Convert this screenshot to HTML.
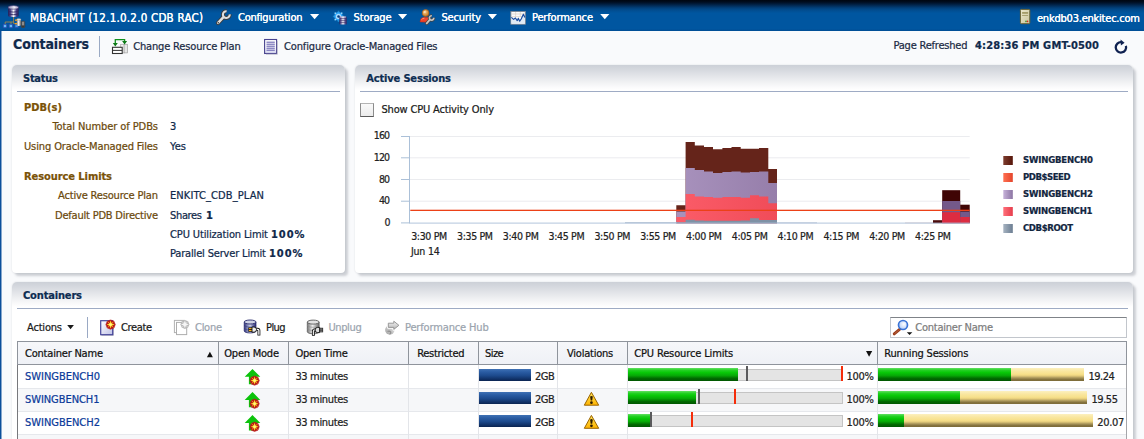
<!DOCTYPE html>
<html lang="en"><head><meta charset="utf-8"><title>Containers</title>
<style>
html,body{margin:0;padding:0}
body{width:1144px;height:439px;overflow:hidden;position:relative;background:#f9fafc;font-family:"DejaVu Sans Condensed","Liberation Sans",sans-serif;}
.t{-webkit-text-stroke:0.22px currentColor;position:absolute;white-space:pre;line-height:20px;height:20px;font-family:"DejaVu Sans Condensed","Liberation Sans",sans-serif;}
.tb{text-shadow:0 0 0.6px rgba(255,255,255,.9);}
.abs{position:absolute}
#topbar{left:0;top:0;width:1144px;height:30.5px;background:linear-gradient(#000611 0,#000d20 2px,#011c3c 4px,#022e5c 6px,#02407b 8px,#024c8e 10px,#01539a 12px,#0056a0 13.5px,#0056a0 28.5px,#004f97 30.5px);}
#leftb{left:0;top:30.5px;width:2px;height:409px;background:linear-gradient(90deg,#0b4f9b 0,#0b4f9b 1px,#86a7cd 1px,#86a7cd 1.5px,rgba(134,167,205,0) 2px);}
.panel{position:absolute;background:#fff;border-radius:5px 5px 4px 4px;box-shadow:3px 3px 2.5px rgba(70,78,95,.25),0 0 2px rgba(50,55,70,.14);}
.panel .hd{position:absolute;left:0;top:0;right:0;height:25px;border-radius:5px 5px 0 0;background:linear-gradient(#ccd0d7 0,#d6d9df 5px,#e3e5e9 11px,#f0f1f3 17px,#fafafb 22px,#fff 25px);}
.panel .rule{position:absolute;left:5.5px;right:5.5px;top:26px;height:1px;background:#9eabc4;}
.vsep{position:absolute;width:1px;background:#9aa9c4;}
#tbl{left:17px;top:341px;width:1110px;height:98px;border-left:1px solid #77787c;border-right:1px solid #a5a6aa;box-sizing:border-box;background:#fff;}
#thead{left:17px;top:341px;width:1110px;height:24px;box-sizing:border-box;border:1px solid #8f949c;background:linear-gradient(#f6f7fa,#eff1f6);}
.cdh{position:absolute;top:342px;height:22px;width:1px;background:#8f949c;}
.cdb{position:absolute;top:365px;height:74px;width:1px;background:#e3e5e9;}
.rowalt{position:absolute;left:18px;width:1108px;height:23px;background:#f6f7f9;}
.rowln{position:absolute;left:18px;width:1108px;height:1px;background:#e6e8ec;}
.bbar{position:absolute;height:12.5px;width:52px;left:479px;background:linear-gradient(#3f71b4 0,#2a5ca3 25%,#1d4a8c 55%,#0e2c5f 90%,#0b2450 100%);}
.track{position:absolute;left:627.8px;width:214.8px;box-sizing:border-box;background:#e4e4e4;border:1px solid #c4c4c4;}
.gbar{position:absolute;background:linear-gradient(#62e062 0,#22d022 18%,#08c808 35%,#06a806 58%,#016a01 80%,#005600 100%);}
.ybar{position:absolute;background:linear-gradient(#fcf0bf 0,#f9e69f 25%,#f7e08a 48%,#e6cd7c 60%,#a8955a 76%,#85733e 88%,#7c6b39 100%);}
.gbar2{position:absolute;height:12.8px;background:linear-gradient(#3fd63f 0,#1fbb1f 25%,#0e9a0e 55%,#077007 88%,#055a05 100%);}
.mk{position:absolute;width:2px;}

</style></head>
<body>
<div id="topbar" class="abs"></div>
<div id="leftb" class="abs"></div>
<!-- title row -->
<div class="vsep" style="left:99px;top:36px;height:21px"></div>

<!-- panels -->
<div class="panel" style="left:11.5px;top:65px;width:333.5px;height:207.7px"><div class="hd"></div><div class="rule"></div></div>
<div class="panel" style="left:354.5px;top:65px;width:778.7px;height:207.7px"><div class="hd"></div><div class="rule"></div></div>
<div class="panel" style="left:11.5px;top:282px;width:1121.7px;height:180px"><div class="hd"></div><div class="rule"></div></div>

<!-- checkbox -->
<div class="abs" style="left:360px;top:103px;width:14px;height:14px;box-sizing:border-box;border:1px solid;border-color:#b4b4b4 #8c8c8c #5a5a5a #8c8c8c;background:linear-gradient(#fafafa,#ebebeb)"></div>

<svg class="abs" style="left:0;top:0" width="1144" height="439" viewBox="0 0 1144 439">
<defs>
<linearGradient id="gp" x1="0" x2="1" y1="0" y2="0"><stop offset="0" stop-color="#a892bd"/><stop offset="1" stop-color="#967eaa"/></linearGradient>
<linearGradient id="gr" x1="0" x2="1" y1="0" y2="0"><stop offset="0" stop-color="#fb5c68"/><stop offset="1" stop-color="#f04c59"/></linearGradient>
<linearGradient id="sw0" x1="0" x2="1" y1="0" y2="0"><stop offset="0" stop-color="#7d3d2e"/><stop offset="1" stop-color="#561509"/></linearGradient>
<linearGradient id="sw1" x1="0" x2="1" y1="0" y2="0"><stop offset="0" stop-color="#ff7050"/><stop offset="1" stop-color="#e4452c"/></linearGradient>
<linearGradient id="sw2" x1="0" x2="1" y1="0" y2="0"><stop offset="0" stop-color="#c6b2d9"/><stop offset="1" stop-color="#8c75a3"/></linearGradient>
<linearGradient id="sw3" x1="0" x2="1" y1="0" y2="0"><stop offset="0" stop-color="#ff707a"/><stop offset="1" stop-color="#e63d4c"/></linearGradient>
<linearGradient id="sw4" x1="0" x2="1" y1="0" y2="0"><stop offset="0" stop-color="#a6b3c1"/><stop offset="1" stop-color="#6c7e92"/></linearGradient>
</defs>
<rect x="409.4" y="136.0" width="560.3" height="1" fill="#ebecef"/>
<rect x="409.4" y="157.3" width="560.3" height="1" fill="#ebecef"/>
<rect x="409.4" y="179.0" width="560.3" height="1" fill="#ebecef"/>
<rect x="409.4" y="200.7" width="560.3" height="1" fill="#ebecef"/>
<path d="M676.3 223.2 L676.3 205.2 L685.6 205.2 L685.6 142 L694.8 142 L694.8 145.5 L704 145.5 L704 147 L713 147 L713 149.3 L722.4 149.3 L722.4 148 L731.5 148 L731.5 147 L740.7 147 L740.7 148.8 L750 148.8 L750 148.8 L759 148.8 L759 148 L768.3 148 L768.3 168.9 L777 168.9 L777 223.2 Z" fill="#65241a"/>
<path d="M676.3 223.2 L676.3 211.5 L685.6 211.5 L685.6 168 L694.8 168 L694.8 170 L704 170 L704 171.5 L713 171.5 L713 173 L722.4 173 L722.4 172 L731.5 172 L731.5 171.4 L740.7 171.4 L740.7 172.6 L750 172.6 L750 171.9 L759 171.9 L759 171.4 L768.3 171.4 L768.3 183 L777 183 L777 223.2 Z" fill="url(#gp)"/>
<path d="M676.3 223.2 L676.3 217 L685.6 217 L685.6 194 L694.8 194 L694.8 196.4 L704 196.4 L704 197 L713 197 L713 197.7 L722.4 197.7 L722.4 197 L731.5 197 L731.5 197 L740.7 197 L740.7 197.7 L750 197.7 L750 195.2 L759 195.2 L759 196.4 L768.3 196.4 L768.3 203.2 L777 203.2 L777 223.2 Z" fill="url(#gr)"/>
<path d="M676.3 223.2 L676.3 222.2 L685.6 222.2 L685.6 219.7 L694.8 219.7 L694.8 220.6 L704 220.6 L704 220.8 L713 220.8 L713 220.8 L722.4 220.8 L722.4 220.8 L731.5 220.8 L731.5 220.8 L740.7 220.8 L740.7 220.6 L750 220.6 L750 218.2 L759 218.2 L759 220 L768.3 220 L768.3 220 L777 220 L777 223.2 Z" fill="#7f91a5"/>
<rect x="625" y="222.2" width="52" height="1" fill="#9fb0c6" opacity=".8"/>
<rect x="777" y="222.3" width="40" height="0.9" fill="#a9b8cc" opacity=".7"/>
<rect x="905" y="222.3" width="28" height="1" fill="#c9a9b0" opacity=".45"/>
<rect x="933" y="220.2" width="9.2" height="3" fill="#4a0a0a"/>
<rect x="942.2" y="190.2" width="18" height="33" fill="#3f0505"/>
<rect x="942.2" y="201" width="18" height="22.2" fill="#74598a"/>
<rect x="942.2" y="212.2" width="18" height="11" fill="#dc2c41"/>
<rect x="960.2" y="204.7" width="9.5" height="18.5" fill="#3f0505"/>
<rect x="960.2" y="211.5" width="9.5" height="11.7" fill="#74598a"/>
<rect x="960.2" y="217" width="9.5" height="6.2" fill="#dc2c41"/>
<rect x="409" y="136" width="1" height="87.4" fill="#abc0d8"/>
<rect x="409.4" y="222.6" width="560.3" height="1" fill="#abc0d8" opacity=".9"/>
<rect x="401" y="136.0" width="8.4" height="1" fill="#abc0d8"/>
<rect x="401" y="157.3" width="8.4" height="1" fill="#abc0d8"/>
<rect x="401" y="179.0" width="8.4" height="1" fill="#abc0d8"/>
<rect x="401" y="200.7" width="8.4" height="1" fill="#abc0d8"/>
<rect x="401" y="222.4" width="8.4" height="1" fill="#abc0d8"/>
<rect x="410.3" y="209.7" width="559.4" height="1.3" fill="#ec4117"/>
<rect x="1003.3" y="156" width="9.5" height="9" fill="url(#sw0)"/>
<rect x="1003.3" y="173" width="9.5" height="9" fill="url(#sw1)"/>
<rect x="1003.3" y="190" width="9.5" height="9" fill="url(#sw2)"/>
<rect x="1003.3" y="207" width="9.5" height="9" fill="url(#sw3)"/>
<rect x="1003.3" y="224" width="9.5" height="9" fill="url(#sw4)"/>
</svg>

<!-- containers toolbar -->
<div class="vsep" style="left:87px;top:317px;height:21px"></div>
<div class="abs" style="left:890px;top:317px;width:237px;height:21px;box-sizing:border-box;background:#fff;border:1px solid #c2c6cc;border-top-color:#7f8388"></div>

<!-- table -->
<div id="tbl" class="abs"></div>
<div class="rowalt" style="top:388px"></div>
<div class="rowalt" style="top:434.5px"></div>
<div class="rowln" style="top:387.7px"></div>
<div class="rowln" style="top:411px"></div>
<div class="rowln" style="top:434.2px"></div>
<div id="thead" class="abs"></div>
<div class="cdb" style="left:217.9px"></div>
<div class="cdh" style="left:217.9px"></div>
<div class="cdb" style="left:288.0px"></div>
<div class="cdh" style="left:288.0px"></div>
<div class="cdb" style="left:407.9px"></div>
<div class="cdh" style="left:407.9px"></div>
<div class="cdb" style="left:477.8px"></div>
<div class="cdh" style="left:477.8px"></div>
<div class="cdb" style="left:557.1px"></div>
<div class="cdh" style="left:557.1px"></div>
<div class="cdb" style="left:626.8px"></div>
<div class="cdh" style="left:626.8px"></div>
<div class="cdb" style="left:876.9px"></div>
<div class="cdh" style="left:876.9px"></div>
<div class="bbar" style="top:368.9px"></div>
<div class="track" style="top:369.4px;height:11.5px"></div>
<div class="gbar" style="left:627.8px;top:368.2px;height:13.2px;width:110.3px"></div>
<div class="mk" style="left:746px;top:366px;height:15.3px;background:#5a5a5c"></div>
<div class="mk" style="left:841px;top:366px;height:15.3px;background:#f52d0a"></div>
<div class="ybar" style="left:878.2px;top:368.2px;height:13.2px;width:205.4px"></div>
<div class="gbar" style="left:878.2px;top:368.2px;height:13.2px;width:132.8px"></div>
<div class="bbar" style="top:391.9px"></div>
<div class="track" style="top:392.4px;height:11.4px"></div>
<div class="gbar" style="left:627.8px;top:391.4px;height:13.0px;width:68.3px"></div>
<div class="mk" style="left:698px;top:389px;height:15.3px;background:#5a5a5c"></div>
<div class="mk" style="left:734px;top:389px;height:15.3px;background:#f52d0a"></div>
<div class="ybar" style="left:878.2px;top:391.4px;height:13.0px;width:209.1px"></div>
<div class="gbar" style="left:878.2px;top:391.4px;height:13.0px;width:81.8px"></div>
<div class="bbar" style="top:414.9px"></div>
<div class="track" style="top:415.3px;height:11.5px"></div>
<div class="gbar" style="left:627.8px;top:414.4px;height:13.1px;width:22.4px"></div>
<div class="mk" style="left:650px;top:412.1px;height:15.4px;background:#5a5a5c"></div>
<div class="mk" style="left:691px;top:412.1px;height:15.4px;background:#f52d0a"></div>
<div class="ybar" style="left:878.2px;top:414.4px;height:13.1px;width:214.6px"></div>
<div class="gbar" style="left:878.2px;top:414.4px;height:13.1px;width:26.3px"></div>
<svg class="abs" style="left:0;top:0" width="1144" height="439" viewBox="0 0 1144 439">
<defs>
<linearGradient id="cyl" x1="0" x2="1" y1="0" y2="0"><stop offset="0" stop-color="#2e2660"/><stop offset=".18" stop-color="#6a5c9c"/><stop offset=".5" stop-color="#ffffff"/><stop offset=".8" stop-color="#5b4d90"/><stop offset="1" stop-color="#2e2660"/></linearGradient>
<linearGradient id="cylg" x1="0" x2="1" y1="0" y2="0"><stop offset="0" stop-color="#777"/><stop offset=".45" stop-color="#f0f0f0"/><stop offset="1" stop-color="#666"/></linearGradient>
<linearGradient id="pg" x1="0" x2="1" y1="0" y2="1"><stop offset="0" stop-color="#fff"/><stop offset="1" stop-color="#bfc1e6"/></linearGradient>
<linearGradient id="wy" x1="0" x2="0" y1="0" y2="1"><stop offset="0" stop-color="#ffe45a"/><stop offset="1" stop-color="#ffb400"/></linearGradient>
<radialGradient id="lens" cx=".6" cy=".4" r=".7"><stop offset="0" stop-color="#fff"/><stop offset="1" stop-color="#a9c6f7"/></radialGradient>
<radialGradient id="headg" cx=".38" cy=".35" r=".7"><stop offset="0" stop-color="#fff6e6"/><stop offset=".35" stop-color="#e8ae62"/><stop offset="1" stop-color="#c0701c"/></radialGradient>
<linearGradient id="cyld" x1="0" x2="1" y1="0" y2="0"><stop offset="0" stop-color="#221e54"/><stop offset=".22" stop-color="#4b4189"/><stop offset=".52" stop-color="#ffffff"/><stop offset=".78" stop-color="#4b4189"/><stop offset="1" stop-color="#221e54"/></linearGradient>
<linearGradient id="cyltop" x1="0" x2="1" y1="0" y2="0"><stop offset="0" stop-color="#8e88b8"/><stop offset=".6" stop-color="#f2f0fa"/><stop offset="1" stop-color="#9a94c0"/></linearGradient>
<linearGradient id="cylp" x1="0" x2="1" y1="0" y2="0"><stop offset="0" stop-color="#2c2e74"/><stop offset=".25" stop-color="#7c82b4"/><stop offset=".5" stop-color="#ced2e6"/><stop offset=".8" stop-color="#5a5e9c"/><stop offset="1" stop-color="#2c2e74"/></linearGradient>
<linearGradient id="globeg" x1="1" x2="0" y1="0" y2="1"><stop offset="0" stop-color="#e8e8e8"/><stop offset="1" stop-color="#a2a2a2"/></linearGradient>
<linearGradient id="arrg" x1="0" x2="0" y1="0" y2="1"><stop offset="0" stop-color="#f4f4f4"/><stop offset="1" stop-color="#b4b4b4"/></linearGradient>
<linearGradient id="pg2" x1="0" x2="0" y1="0" y2="1"><stop offset="0" stop-color="#fff"/><stop offset=".6" stop-color="#f6f6fc"/><stop offset="1" stop-color="#d4d4ee"/></linearGradient>
<linearGradient id="hostg" x1="0" x2="1" y1="0" y2="1"><stop offset="0" stop-color="#ece7cc"/><stop offset="1" stop-color="#cbc49c"/></linearGradient>
<g id="dd"><path d="M0 0 L9.2 0 L4.6 5.1 Z" fill="#fff"/></g>
<g id="star"><path d="M0 -4.7 L3.4 -3.4 L4.7 0 L3.4 3.4 L0 4.7 L-3.4 3.4 L-4.7 0 L-3.4 -3.4 Z" fill="#b8181a" stroke="#b8181a" stroke-width=".5" stroke-linejoin="round"/><path d="M-2.9 -2.9 L2.9 2.9 M2.9 -2.9 L-2.9 2.9" stroke="#ffae1a" stroke-width=".8"/><path d="M0 -4 L1.05 -1.05 L4 0 L1.05 1.05 L0 4 L-1.05 1.05 L-4 0 L-1.05 -1.05 Z" fill="#ffe128"/><circle r="1.3" fill="#fff58c"/></g>
<g id="uparrow"><path d="M252.5 368.9 L260.3 376.8 L256 376.8 L256 384.2 L248.9 384.2 L248.9 376.8 L244.7 376.8 Z" fill="#0cc30c"/><use href="#star" x="254.6" y="380.6"/></g>
<g id="warn"><path d="M591.4 392.3 L598.7 405.2 L584.3 405.2 Z" fill="url(#wy)" stroke="#9a6400" stroke-width="1" stroke-linejoin="round"/><path d="M590.1 396.6 Q591.45 395.3 592.8 396.6 L592.2 400.6 H590.7 Z" fill="#2e1c00"/><circle cx="591.45" cy="402.7" r="1.35" fill="#2e1c00"/></g>
</defs>
<!-- DB target icon -->
<g>
<path d="M5.2 24.5 V22 H13.6 M11 24.5 V22 M13.6 17 V23.6 H16.2" fill="none" stroke="#b48a3c" stroke-width=".8"/>
<rect x="3.3" y="24.3" width="3.4" height="3.4" fill="#62bcf8" stroke="#2a4cae" stroke-width=".8"/>
<rect x="9.2" y="24.3" width="3.4" height="3.4" fill="#62bcf8" stroke="#2a4cae" stroke-width=".8"/>
<rect x="15" y="24.3" width="3.2" height="3.2" fill="#3a9ae8" stroke="#2a4cae" stroke-width=".8"/>
<path d="M8.1 7.4 V15.4 A5.25 1.7 0 0 0 18.6 15.4 V7.4 Z" fill="url(#cyld)"/>
<ellipse cx="13.35" cy="7.4" rx="5.25" ry="1.8" fill="url(#cyltop)" stroke="#2c2660" stroke-width=".6"/>
<path d="M8.1 10.4 A5.25 1.7 0 0 0 18.6 10.4 M8.1 13 A5.25 1.7 0 0 0 18.6 13" fill="none" stroke="#2c2660" stroke-width=".9" opacity=".9"/>
<path d="M16.6 19.4 V25 A2.2 .9 0 0 0 21 25 V19.4 Z" fill="url(#cylg)"/>
<ellipse cx="18.8" cy="19.4" rx="2.2" ry=".9" fill="#eee" stroke="#777" stroke-width=".4"/>
<rect x="21.4" y="21.2" width="3.3" height="6.2" rx=".6" fill="#8c8c8c" stroke="#333" stroke-width=".7"/>
<rect x="21.6" y="25.4" width="2.9" height="1.9" fill="#3a3a3a"/>
<rect x="15" y="19.5" width="2.1" height="1.3" fill="#f0a020"/><rect x="15" y="23" width="2.1" height="1.3" fill="#f0a020"/>
</g>
<!-- wrench -->
<g fill="none">
<path d="M222.9 17.7 L218.1 22.9" stroke="#3b3b3b" stroke-width="4.3" stroke-linecap="round"/>
<path d="M226.6 11.2 A3.4 3.4 0 1 0 229.7 14.3" stroke="#3b3b3b" stroke-width="3.9"/>
<path d="M226.6 11.2 A3.4 3.4 0 1 0 229.7 14.3" stroke="#dedede" stroke-width="2.1"/>
<path d="M223.2 17.4 L218.1 22.9" stroke="#dedede" stroke-width="2.5" stroke-linecap="round"/>
<circle cx="218.3" cy="22.7" r=".8" fill="#3b3b3b"/>
</g>
<use href="#dd" x="310" y="14.1"/>
<use href="#dd" x="398" y="14.1"/>
<use href="#dd" x="487.8" y="14.1"/>
<use href="#dd" x="600.2" y="14.1"/>
<!-- storage icon -->
<g>
<path d="M337.63 12.50 L337.76 10.75 L339.24 10.75 L339.37 12.50 L340.64 13.02 L341.97 11.88 L343.02 12.93 L341.88 14.26 L342.40 15.53 L344.15 15.66 L344.15 17.14 L342.40 17.27 L341.88 18.54 L343.02 19.87 L341.97 20.92 L340.64 19.78 L339.37 20.30 L339.24 22.05 L337.76 22.05 L337.63 20.30 L336.36 19.78 L335.03 20.92 L333.98 19.87 L335.12 18.54 L334.60 17.27 L332.85 17.14 L332.85 15.66 L334.60 15.53 L335.12 14.26 L333.98 12.93 L335.03 11.88 L336.36 13.02 Z" fill="#1c86cc"/>
<circle cx="338.5" cy="16.4" r="4.1" fill="#2fa8fa"/>
<circle cx="338.5" cy="16.4" r="2.7" fill="#a9dcff"/>
<circle cx="338.5" cy="16.4" r="1.25" fill="#0a3c7c"/>
<circle cx="335.25" cy="13.15" r=".6" fill="#e8f6ff"/><circle cx="341.75" cy="13.15" r=".6" fill="#e8f6ff"/><circle cx="335.25" cy="19.65" r=".6" fill="#e8f6ff"/>
<rect x="339.4" y="16.4" width="7.3" height="8.2" rx="1.2" fill="url(#cyl)"/>
<path d="M339.6 18.6 H346.5 M339.6 20.6 H346.5 M339.6 22.6 H346.5" stroke="#3a2e66" stroke-width=".7" opacity=".85"/>
<path d="M340 17 H346.1" stroke="#d9d4ea" stroke-width=".8"/>
</g>
<!-- security icon -->
<g>
<path d="M420 21.9 Q420.2 17.6 423.6 17.3 L428.2 17.3 Q430 17.5 430 19 L427.6 22.2 Z" fill="#f0432a" stroke="#b82814" stroke-width=".5"/>
<path d="M421.5 19.6 Q422.4 18.3 424.4 18.2" stroke="#ff9a80" stroke-width=".9" fill="none"/>
<circle cx="425.6" cy="13" r="3.4" fill="url(#headg)" stroke="#a85c14" stroke-width=".7"/>
<g fill="none">
<path d="M429.7 19.9 L426.7 23.3" stroke="#444" stroke-width="3.3" stroke-linecap="round"/>
<path d="M431.8 15.7 A2.2 2.2 0 1 0 433.8 17.7" stroke="#444" stroke-width="3.1"/>
<path d="M431.8 15.7 A2.2 2.2 0 1 0 433.8 17.7" stroke="#c4c4c4" stroke-width="1.6"/>
<path d="M429.9 19.7 L426.7 23.3" stroke="#c4c4c4" stroke-width="1.8" stroke-linecap="round"/>
</g>
</g>
<!-- performance icon -->
<g>
<rect x="510.9" y="11.5" width="14.4" height="12.7" fill="#fbfbfb" stroke="#7f8692" stroke-width=".9"/>
<path d="M511.4 14 H524.9 M511.4 16.6 H524.9 M515.6 12 V16.6 M520.3 12 V16.6" stroke="#d9cfc4" stroke-width=".7" fill="none"/>
<path d="M511.4 17.4 L513.6 19.4 L515.4 18 L517.2 20.6 L518.4 18.4 L519.7 21.2 L521.2 19 L523.4 14.2 L524.9 17.6 V23.7 H511.4 Z" fill="#dfeaf5"/>
<path d="M511.4 17.4 L513.6 19.4 L515.4 18 L517.2 20.6 L518.4 18.4 L519.7 21.2 L521.2 19 L523.4 14.2 L524.9 17.6" fill="none" stroke="#1d4fa3" stroke-width="1.2" stroke-linejoin="round"/>
</g>
<!-- host icon -->
<g>
<rect x="1020.4" y="9.4" width="9.4" height="14.3" rx=".9" fill="url(#hostg)" stroke="#6c6230" stroke-width="1"/>
<rect x="1022.1" y="12" width="6" height="1.8" fill="#a39b68"/>
<rect x="1022.1" y="15" width="6" height=".9" fill="#a39b68"/>
<circle cx="1026" cy="21.4" r=".8" fill="#2aa02a"/><circle cx="1027.5" cy="21.4" r=".8" fill="#e02020"/>
</g>
<!-- change resource plan -->
<g>
<rect x="120.7" y="44.3" width="3.4" height="8.6" fill="#f4f4f4" stroke="#a9a9a9" stroke-width=".7"/>
<rect x="124.1" y="44.3" width="3.4" height="8.6" fill="#e6e6e6" stroke="#a2a2a2" stroke-width=".7"/>
<path d="M115.3 44 V39.7 H124.6 V42" fill="none" stroke="#12901e" stroke-width="1.3"/>
<path d="M112.8 43 H117.8 L115.3 46.5 Z M122.1 41.1 H127.1 L124.6 44.6 Z" fill="#0d7a16"/>
<rect x="112.5" y="47.3" width="9.7" height="6.2" fill="#fff" stroke="#333" stroke-width="1.1"/>
<path d="M112.5 50.4 H122.2" stroke="#333" stroke-width="1"/>
</g>
<!-- configure file icon -->
<g>
<rect x="264.6" y="39.5" width="12" height="14" fill="url(#pg2)" stroke="#48428e" stroke-width="1.1"/>
<path d="M266.5 42.2 H274.8 M266.5 44.2 H274.8 M266.5 46.2 H274.8 M266.5 48.2 H274.8 M266.5 50.2 H274.8" stroke="#5f59ac" stroke-width="1"/>
<path d="M277.4 41 V54.3 H266" stroke="#b9b9c9" stroke-width=".8" fill="none"/>
</g>
<!-- refresh -->
<g>
<path d="M1125.9 45.8 A5.2 5.2 0 1 1 1121.4 42.15" fill="none" stroke="#0f2150" stroke-width="2.3"/>
<path d="M1120.5 39.6 L1124.6 42.7 L1120.9 45.5 Z" fill="#0f2150"/>
</g>
<!-- Actions dd -->
<path d="M67.2 325 H73.9 L70.55 329.2 Z" fill="#1a1a1a"/>
<!-- create -->
<g>
<path d="M101.4 335.4 H113.4 V322.4" fill="none" stroke="#b8b8c4" stroke-width=".9"/><rect x="100.7" y="320.7" width="12" height="14" fill="url(#pg)" stroke="#45459a" stroke-width="1.2"/>
<use href="#star" x="110.6" y="324.6"/>
</g>
<!-- clone -->
<g>
<rect x="174.4" y="320.4" width="10.2" height="12.2" fill="#fff" stroke="#b2b2b2" stroke-width="1"/>
<rect x="176.5" y="322.4" width="10.2" height="12.2" fill="#fff" stroke="#adadad" stroke-width="1"/>
<g transform="translate(184.9 324.4)"><path d="M0 -4.5 L3.2 -3.2 L4.5 0 L3.2 3.2 L0 4.5 L-3.2 3.2 L-4.5 0 L-3.2 -3.2 Z" fill="#b9b9b9"/><path d="M-2.8 -2.8 L2.8 2.8 M2.8 -2.8 L-2.8 2.8" stroke="#e4e4e4" stroke-width=".8"/><path d="M0 -3.9 L1.05 -1.05 L3.9 0 L1.05 1.05 L0 3.9 L-1.05 1.05 L-3.9 0 L-1.05 -1.05 Z" fill="#f6f6f6"/></g>
</g>
<!-- plug -->
<g>
<path d="M244.2 322 V331 A5.9 2 0 0 0 256 331 V322 Z" fill="url(#cylp)" stroke="#26286a" stroke-width=".7"/>
<path d="M244.2 325 A5.9 2 0 0 0 256 325 M244.2 328 A5.9 2 0 0 0 256 328" fill="none" stroke="#30327a" stroke-width=".6" opacity=".75"/>
<ellipse cx="250.1" cy="322" rx="5.9" ry="2" fill="#cfd2e4" stroke="#26286a" stroke-width=".9"/>
<path d="M256.3 329.3 H257.7 Q258.9 329.3 258.9 330.6 V335.4" fill="none" stroke="#111" stroke-width="2.9"/>
<path d="M256.3 329.3 H257.7 Q258.9 329.3 258.9 330.6 V334.7" fill="none" stroke="#fff" stroke-width="1.3"/>
<rect x="248.3" y="327.4" width="4" height="4.4" fill="#111"/>
<rect x="248.9" y="328.1" width="3.2" height="1.1" fill="#ffb31a"/><rect x="248.9" y="330" width="3.2" height="1.1" fill="#ffb31a"/>
<path d="M252 327 H254 Q256.5 327 256.5 329.6 Q256.5 332.2 254 332.2 H252 Z" fill="#ececec" stroke="#111" stroke-width=".9"/>
</g>
<!-- unplug -->
<g>
<path d="M307.3 322.1 V331.8 A5.9 2 0 0 0 319.1 331.8 V322.1 Z" fill="url(#cylg)" stroke="#5c5c5c" stroke-width=".8"/>
<path d="M307.3 325.3 A5.9 2 0 0 0 319.1 325.3 M307.3 328.5 A5.9 2 0 0 0 319.1 328.5" fill="none" stroke="#8a8a8a" stroke-width=".6"/>
<ellipse cx="313.2" cy="322.1" rx="5.9" ry="2" fill="#e2e2e2" stroke="#5c5c5c" stroke-width=".9"/>
<path d="M313.4 335.8 V331.1 Q313.4 329.9 314.7 329.9 H315.6" fill="none" stroke="#111" stroke-width="2.9"/>
<path d="M313.4 335.1 V331.1 Q313.4 329.9 314.7 329.9 H315.6" fill="none" stroke="#e6e6e6" stroke-width="1.3"/>
<rect x="319.2" y="327.8" width="3.9" height="4.5" fill="#111"/>
<rect x="319.6" y="328.6" width="3" height=".9" fill="#c4c4c4"/><rect x="319.6" y="330.6" width="3" height=".9" fill="#c4c4c4"/>
<path d="M319.6 327.4 H317.6 Q315.1 327.4 315.1 330 Q315.1 332.6 317.6 332.6 H319.6 Z" fill="#dedede" stroke="#111" stroke-width=".9"/>
</g>
<!-- perf hub -->
<g>
<circle cx="389.8" cy="330" r="4.7" fill="url(#globeg)"/>
<path d="M387.5 331.5 Q389.5 330.5 390.8 332.2 Q391 333.6 389.6 334.2" fill="none" stroke="#8f8f8f" stroke-width="1.1"/>
<path d="M388.3 323.2 H393.8 V321.2 L398.9 325.3 L393.8 329.4 V327.4 H388.3 Z" fill="#fff" stroke="#fff" stroke-width="2.6" stroke-linejoin="round"/>
<path d="M388.3 323.2 H393.8 V321.2 L398.9 325.3 L393.8 329.4 V327.4 H388.3 Z" fill="url(#arrg)" stroke="#8e8e8e" stroke-width=".9" stroke-linejoin="round"/>
</g>
<!-- magnifier -->
<g>
<path d="M899.6 329.4 L894.2 333.9" stroke="#9a3a18" stroke-width="2.8" stroke-linecap="round"/>
<path d="M899.2 329.8 L894.6 333.6" stroke="#e0a080" stroke-width=".8" stroke-dasharray=".7 .7"/>
<circle cx="903" cy="325" r="4.5" fill="url(#lens)" stroke="#3b74d6" stroke-width="1.7"/>
<path d="M906.8 332.3 H912.3 L909.55 335.1 Z" fill="#111"/>
</g>
<!-- sort indicators -->
<path d="M206.9 357.2 H212.9 L209.9 351.7 Z" fill="#111"/>
<path d="M866 350.9 H872.2 L869.1 356.7 Z" fill="#111"/>
<!-- arrows -->
<use href="#uparrow"/>
<use href="#uparrow" y="23.1"/>
<use href="#uparrow" y="46.2"/>
<use href="#warn"/>
<use href="#warn" y="23.1"/>
</svg>


<div id="texts">
<span class="t tb" style="left:30.0px;top:7.9px;font-size:11.5px;color:#fff;letter-spacing:0.229px;">MBACHMT (12.1.0.2.0 CDB RAC)</span>
<span class="t tb" style="left:238.0px;top:8.3px;font-size:11px;color:#fff;letter-spacing:-0.219px;">Configuration</span>
<span class="t tb" style="left:353.6px;top:8.3px;font-size:11px;color:#fff;letter-spacing:-0.122px;">Storage</span>
<span class="t tb" style="left:441.5px;top:8.3px;font-size:11px;color:#fff;letter-spacing:-0.163px;">Security</span>
<span class="t tb" style="left:532.0px;top:8.3px;font-size:11px;color:#fff;letter-spacing:-0.166px;">Performance</span>
<span class="t tb" style="left:1037.0px;top:9.0px;font-size:11px;color:#fff;letter-spacing:-0.219px;">enkdb03.enkitec.com</span>
<span class="t" style="left:13.0px;top:34.3px;font-size:14px;color:#10294b;font-weight:bold;letter-spacing:-0.104px;">Containers</span>
<span class="t" style="left:133.2px;top:36.6px;font-size:11px;color:#1b2a44;letter-spacing:-0.161px;">Change Resource Plan</span>
<span class="t" style="left:284.0px;top:36.6px;font-size:11px;color:#1b2a44;letter-spacing:-0.129px;">Configure Oracle-Managed Files</span>
<span class="t" style="left:893.5px;top:35.6px;font-size:11px;color:#1b2a44;letter-spacing:-0.210px;">Page Refreshed</span>
<span class="t" style="left:975.0px;top:35.6px;font-size:11px;color:#10294b;font-weight:bold;letter-spacing:0.161px;">4:28:36 PM GMT-0500</span>
<span class="t" style="left:23.0px;top:68.5px;font-size:11px;color:#0e2d52;font-weight:bold;letter-spacing:-0.244px;">Status</span>
<span class="t" style="left:24.0px;top:98.1px;font-size:11px;color:#7a5207;font-weight:bold;letter-spacing:0.009px;">PDB(s)</span>
<span class="t" style="left:52.5px;top:117.2px;font-size:11px;color:#6b490c;letter-spacing:-0.088px;">Total Number of PDBs</span>
<span class="t" style="left:24.0px;top:136.5px;font-size:11px;color:#6b490c;letter-spacing:-0.121px;">Using Oracle-Managed Files</span>
<span class="t" style="left:170.0px;top:117.2px;font-size:11px;color:#10294a;">3</span>
<span class="t" style="left:170.0px;top:136.5px;font-size:11px;color:#10294a;letter-spacing:0.078px;">Yes</span>
<span class="t" style="left:24.0px;top:166.7px;font-size:11px;color:#7a5207;font-weight:bold;letter-spacing:-0.071px;">Resource Limits</span>
<span class="t" style="left:58.0px;top:185.9px;font-size:11px;color:#6b490c;letter-spacing:-0.171px;">Active Resource Plan</span>
<span class="t" style="left:55.0px;top:206.1px;font-size:11px;color:#6b490c;letter-spacing:-0.206px;">Default PDB Directive</span>
<span class="t" style="left:170.0px;top:185.9px;font-size:11px;color:#10294a;letter-spacing:0.107px;">ENKITC_CDB_PLAN</span>
<span class="t" style="left:170.0px;top:206.1px;font-size:11px;color:#10294a;letter-spacing:-0.341px;">Shares</span>
<span class="t" style="left:206.0px;top:206.1px;font-size:11px;color:#10294a;font-weight:bold;">1</span>
<span class="t" style="left:170.0px;top:225.1px;font-size:11px;color:#10294a;letter-spacing:-0.127px;">CPU Utilization Limit</span>
<span class="t" style="left:271.0px;top:225.1px;font-size:11px;color:#10294a;font-weight:bold;letter-spacing:0.974px;">100%</span>
<span class="t" style="left:170.0px;top:244.1px;font-size:11px;color:#10294a;letter-spacing:-0.164px;">Parallel Server Limit</span>
<span class="t" style="left:269.0px;top:244.1px;font-size:11px;color:#10294a;font-weight:bold;letter-spacing:0.974px;">100%</span>
<span class="t" style="left:366.3px;top:68.5px;font-size:11px;color:#0e2d52;font-weight:bold;letter-spacing:-0.165px;">Active Sessions</span>
<span class="t" style="left:381.4px;top:100.1px;font-size:11px;color:#1a1a1a;letter-spacing:-0.157px;">Show CPU Activity Only</span>
<span class="t" style="left:373.7px;top:124.8px;font-size:10.5px;color:#222;letter-spacing:-0.816px;">160</span>
<span class="t" style="left:373.7px;top:147.1px;font-size:10.5px;color:#222;letter-spacing:-0.816px;">120</span>
<span class="t" style="left:379.1px;top:168.8px;font-size:10.5px;color:#222;letter-spacing:-1.031px;">80</span>
<span class="t" style="left:379.1px;top:189.5px;font-size:10.5px;color:#222;letter-spacing:-1.031px;">40</span>
<span class="t" style="left:384.6px;top:212.2px;font-size:10.5px;color:#222;">0</span>
<span class="t" style="left:411.2px;top:226.0px;font-size:10.5px;color:#222;letter-spacing:-0.344px;">3:30 PM</span>
<span class="t" style="left:457.0px;top:226.0px;font-size:10.5px;color:#222;letter-spacing:-0.344px;">3:35 PM</span>
<span class="t" style="left:502.8px;top:226.0px;font-size:10.5px;color:#222;letter-spacing:-0.344px;">3:40 PM</span>
<span class="t" style="left:548.6px;top:226.0px;font-size:10.5px;color:#222;letter-spacing:-0.344px;">3:45 PM</span>
<span class="t" style="left:594.4px;top:226.0px;font-size:10.5px;color:#222;letter-spacing:-0.344px;">3:50 PM</span>
<span class="t" style="left:640.2px;top:226.0px;font-size:10.5px;color:#222;letter-spacing:-0.344px;">3:55 PM</span>
<span class="t" style="left:686.0px;top:226.0px;font-size:10.5px;color:#222;letter-spacing:-0.344px;">4:00 PM</span>
<span class="t" style="left:731.8px;top:226.0px;font-size:10.5px;color:#222;letter-spacing:-0.344px;">4:05 PM</span>
<span class="t" style="left:777.6px;top:226.0px;font-size:10.5px;color:#222;letter-spacing:-0.344px;">4:10 PM</span>
<span class="t" style="left:823.4px;top:226.0px;font-size:10.5px;color:#222;letter-spacing:-0.344px;">4:15 PM</span>
<span class="t" style="left:869.2px;top:226.0px;font-size:10.5px;color:#222;letter-spacing:-0.344px;">4:20 PM</span>
<span class="t" style="left:915.0px;top:226.0px;font-size:10.5px;color:#222;letter-spacing:-0.344px;">4:25 PM</span>
<span class="t" style="left:411.0px;top:240.5px;font-size:10.5px;color:#222;letter-spacing:-0.216px;">Jun 14</span>
<span class="t" style="left:1023.0px;top:149.7px;font-size:9.5px;color:#12263f;font-weight:bold;letter-spacing:-0.181px;">SWINGBENCH0</span>
<span class="t" style="left:1023.0px;top:166.8px;font-size:9.5px;color:#12263f;font-weight:bold;letter-spacing:-0.467px;">PDB$SEED</span>
<span class="t" style="left:1023.0px;top:183.8px;font-size:9.5px;color:#12263f;font-weight:bold;letter-spacing:-0.181px;">SWINGBENCH2</span>
<span class="t" style="left:1023.0px;top:200.9px;font-size:9.5px;color:#12263f;font-weight:bold;letter-spacing:-0.231px;">SWINGBENCH1</span>
<span class="t" style="left:1023.0px;top:217.9px;font-size:9.5px;color:#12263f;font-weight:bold;letter-spacing:-0.397px;">CDB$ROOT</span>
<span class="t" style="left:23.0px;top:285.6px;font-size:11px;color:#0e2d52;font-weight:bold;letter-spacing:-0.161px;">Containers</span>
<span class="t" style="left:27.0px;top:318.1px;font-size:11px;color:#1a1a1a;letter-spacing:-0.190px;">Actions</span>
<span class="t" style="left:121.0px;top:318.1px;font-size:11px;color:#1a1a1a;letter-spacing:-0.375px;">Create</span>
<span class="t" style="left:195.0px;top:318.1px;font-size:11px;color:#9ba4ae;letter-spacing:-0.273px;">Clone</span>
<span class="t" style="left:266.0px;top:318.1px;font-size:11px;color:#1a1a1a;letter-spacing:-0.560px;">Plug</span>
<span class="t" style="left:328.4px;top:318.1px;font-size:11px;color:#9ba4ae;letter-spacing:-0.365px;">Unplug</span>
<span class="t" style="left:405.0px;top:318.1px;font-size:11px;color:#9ba4ae;letter-spacing:-0.150px;">Performance Hub</span>
<span class="t" style="left:915.2px;top:317.8px;font-size:11px;color:#7c7c7c;letter-spacing:-0.223px;">Container Name</span>
<span class="t" style="left:25.0px;top:343.8px;font-size:11px;color:#111;letter-spacing:-0.208px;">Container Name</span>
<span class="t" style="left:224.3px;top:343.8px;font-size:11px;color:#111;letter-spacing:-0.231px;">Open Mode</span>
<span class="t" style="left:295.4px;top:343.8px;font-size:11px;color:#111;letter-spacing:-0.171px;">Open Time</span>
<span class="t" style="left:417.2px;top:343.8px;font-size:11px;color:#111;letter-spacing:-0.302px;">Restricted</span>
<span class="t" style="left:485.0px;top:343.8px;font-size:11px;color:#111;letter-spacing:-0.576px;">Size</span>
<span class="t" style="left:567.0px;top:343.8px;font-size:11px;color:#111;letter-spacing:-0.230px;">Violations</span>
<span class="t" style="left:634.2px;top:343.8px;font-size:11px;color:#111;letter-spacing:-0.134px;">CPU Resource Limits</span>
<span class="t" style="left:884.3px;top:343.8px;font-size:11px;color:#111;letter-spacing:-0.172px;">Running Sessions</span>
<span class="t" style="left:25.0px;top:367.2px;font-size:11px;color:#0b3a99;letter-spacing:-0.016px;">SWINGBENCH0</span>
<span class="t" style="left:295.4px;top:367.2px;font-size:11px;color:#222;letter-spacing:-0.333px;">33 minutes</span>
<span class="t" style="left:535.0px;top:367.2px;font-size:11px;color:#222;letter-spacing:-0.483px;">2GB</span>
<span class="t" style="left:846.6px;top:367.2px;font-size:11px;color:#222;letter-spacing:-0.299px;">100%</span>
<span class="t" style="left:25.0px;top:390.3px;font-size:11px;color:#0b3a99;letter-spacing:-0.066px;">SWINGBENCH1</span>
<span class="t" style="left:295.4px;top:390.3px;font-size:11px;color:#222;letter-spacing:-0.333px;">33 minutes</span>
<span class="t" style="left:535.0px;top:390.3px;font-size:11px;color:#222;letter-spacing:-0.483px;">2GB</span>
<span class="t" style="left:846.6px;top:390.3px;font-size:11px;color:#222;letter-spacing:-0.299px;">100%</span>
<span class="t" style="left:25.0px;top:413.4px;font-size:11px;color:#0b3a99;letter-spacing:-0.016px;">SWINGBENCH2</span>
<span class="t" style="left:295.4px;top:413.4px;font-size:11px;color:#222;letter-spacing:-0.333px;">33 minutes</span>
<span class="t" style="left:535.0px;top:413.4px;font-size:11px;color:#222;letter-spacing:-0.483px;">2GB</span>
<span class="t" style="left:846.6px;top:413.4px;font-size:11px;color:#222;letter-spacing:-0.299px;">100%</span>
<span class="t" style="left:1088.5px;top:367.2px;font-size:11px;color:#222;letter-spacing:-0.532px;">19.24</span>
<span class="t" style="left:1091.5px;top:390.3px;font-size:11px;color:#222;letter-spacing:-0.457px;">19.55</span>
<span class="t" style="left:1097.3px;top:413.4px;font-size:11px;color:#222;letter-spacing:-0.357px;">20.07</span>
</div>
</body></html>
